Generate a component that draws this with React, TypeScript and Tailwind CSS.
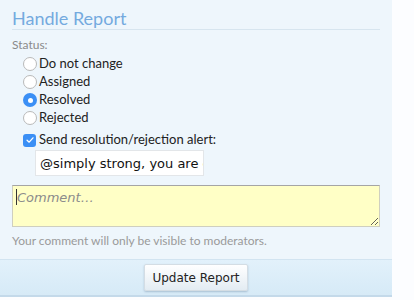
import { useState } from "react";

const statuses = ["Do not change", "Assigned", "Resolved", "Rejected"];

function Radio({ checked }: { checked: boolean }) {
  return checked ? (
    <span className="flex h-[14px] w-[14px] shrink-0 items-center justify-center rounded-full bg-[#3b8ff5]">
      <span className="h-[5px] w-[5px] rounded-full bg-white" />
    </span>
  ) : (
    <span className="h-[14px] w-[14px] shrink-0 rounded-full border border-[#b9b9b9] bg-white" />
  );
}

export default function App() {
  const [status, setStatus] = useState("Resolved");
  const [sendAlert, setSendAlert] = useState(true);

  return (
    <div className="h-[300px] w-[414px] bg-[#fcfdff] font-['Lato',sans-serif]">
      <div className="flex h-[297px] w-[392px] flex-col border-b-2 border-[#c3d9ea] bg-[#eef6fc]">
        {/* ── Heading ───────────────────────────── */}
        <div className="mx-3 border-b border-[#d7e5ef] pt-[8px]">
          <h2 className="text-[18px] leading-[21px] text-[#74aadf]">Handle Report</h2>
        </div>

        <div className="flex-1 px-3 pt-[7px]">
          <div className="text-[12px] leading-4 text-[#8a8a8a]">Status:</div>

          <div className="ml-[11px] mt-[2px] flex flex-col">
            {statuses.map((s) => (
              <label
                key={s}
                onClick={() => setStatus(s)}
                className="flex h-[18px] cursor-pointer items-center gap-[2px] text-[13px] text-[#222]"
              >
                <Radio checked={status === s} />
                <span>{s}</span>
              </label>
            ))}

            <label
              onClick={() => setSendAlert(!sendAlert)}
              className="mt-1 flex h-[18px] cursor-pointer items-center gap-[3px] text-[13px] text-[#222]"
            >
              {sendAlert ? (
                <span className="flex h-[13px] w-[13px] items-center justify-center rounded-[3px] bg-[#3b8ff5]">
                  <svg viewBox="0 0 12 12" className="h-[10px] w-[10px]">
                    <path d="M2.5 6.3 L5 8.6 L9.6 3.4" fill="none" stroke="white" strokeWidth="1.6" strokeLinecap="round" strokeLinejoin="round" />
                  </svg>
                </span>
              ) : (
                <span className="h-[13px] w-[13px] rounded-[3px] border border-[#b9b9b9] bg-white" />
              )}
              <span>Send resolution/rejection alert:</span>
            </label>

            <input
              readOnly
              value="@simply strong, you are currently being reviewed"
              className="ml-[12px] mt-px block h-[26px] w-[169px] border border-[#e3e6e9] bg-white pl-[4px] font-['DejaVu_Sans',sans-serif] text-[13px] text-[#111] outline-none"
            />
          </div>

          <div className="relative mt-[9px]">
            <textarea
              placeholder="Comment…"
              className="block h-[42px] w-[368px] resize-y border border-[#cfcfbf] border-t-[#a5a5a5] bg-[#ffffc6] px-[4px] py-[2px] font-['DejaVu_Sans',sans-serif] text-[13px] leading-[20px] text-[#222] outline-none placeholder:italic placeholder:text-[#8c8c8c]"
            />
            <span className="absolute left-[4px] top-[4px] h-[16px] w-px bg-[#333]" />
          </div>

          <p className="mt-[6px] text-[12px] leading-4 text-[#9a9a9a]">
            Your comment will only be visible to moderators.
          </p>
        </div>

        {/* ── Footer ────────────────────────────── */}
        <div className="flex h-[36px] items-center justify-center border-t border-[#d2e4f1] bg-gradient-to-b from-[#e2f1fb] to-[#d6eaf7]">
          <button className="h-[27px] w-[104px] rounded-[2px] border border-[#d4dde4] bg-gradient-to-b from-[#ffffff] to-[#e3ecf3] font-['DejaVu_Sans',sans-serif] text-[12px] text-[#222] shadow-[0_1px_2px_rgba(80,110,140,0.35)]">
            Update Report
          </button>
        </div>
      </div>
    </div>
  );
}
